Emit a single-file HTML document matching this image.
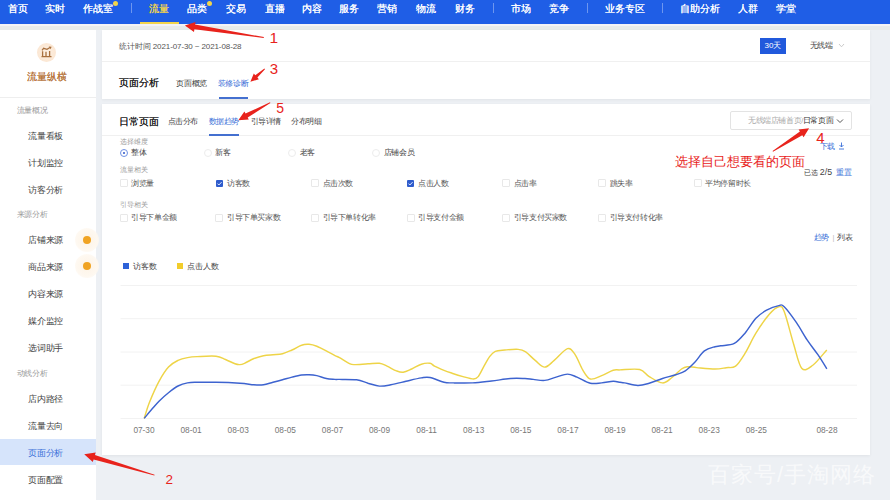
<!DOCTYPE html>
<html><head><meta charset="utf-8"><style>
html,body{margin:0;padding:0;width:890px;height:500px;overflow:hidden;background:#edf0f4;font-family:"Liberation Sans",sans-serif;position:relative}
.t{position:absolute;white-space:nowrap}
</style></head><body>
<div style="position:absolute;left:0;top:0;width:890px;height:24px;background:#1f5ee6"></div>
<div class="t" style="left:7.5px;top:2.3px;font-size:10px;line-height:14px;color:#ffffff;font-weight:normal;text-shadow:0.25px 0 0 #ffffff">首页</div>

<div class="t" style="left:45px;top:2.3px;font-size:10px;line-height:14px;color:#ffffff;font-weight:normal;text-shadow:0.25px 0 0 #ffffff">实时</div>

<div class="t" style="left:83px;top:2.3px;font-size:10px;line-height:14px;color:#ffffff;font-weight:normal;text-shadow:0.25px 0 0 #ffffff">作战室</div>

<div class="t" style="left:149px;top:2.3px;font-size:10px;line-height:14px;color:#f2d54a;font-weight:normal;text-shadow:0.25px 0 0 #f2d54a">流量</div>

<div class="t" style="left:187px;top:2.3px;font-size:10px;line-height:14px;color:#ffffff;font-weight:normal;text-shadow:0.25px 0 0 #ffffff">品类</div>

<div class="t" style="left:226px;top:2.3px;font-size:10px;line-height:14px;color:#ffffff;font-weight:normal;text-shadow:0.25px 0 0 #ffffff">交易</div>

<div class="t" style="left:265px;top:2.3px;font-size:10px;line-height:14px;color:#ffffff;font-weight:normal;text-shadow:0.25px 0 0 #ffffff">直播</div>

<div class="t" style="left:302px;top:2.3px;font-size:10px;line-height:14px;color:#ffffff;font-weight:normal;text-shadow:0.25px 0 0 #ffffff">内容</div>

<div class="t" style="left:339px;top:2.3px;font-size:10px;line-height:14px;color:#ffffff;font-weight:normal;text-shadow:0.25px 0 0 #ffffff">服务</div>

<div class="t" style="left:377px;top:2.3px;font-size:10px;line-height:14px;color:#ffffff;font-weight:normal;text-shadow:0.25px 0 0 #ffffff">营销</div>

<div class="t" style="left:416px;top:2.3px;font-size:10px;line-height:14px;color:#ffffff;font-weight:normal;text-shadow:0.25px 0 0 #ffffff">物流</div>

<div class="t" style="left:455px;top:2.3px;font-size:10px;line-height:14px;color:#ffffff;font-weight:normal;text-shadow:0.25px 0 0 #ffffff">财务</div>

<div class="t" style="left:511px;top:2.3px;font-size:10px;line-height:14px;color:#ffffff;font-weight:normal;text-shadow:0.25px 0 0 #ffffff">市场</div>

<div class="t" style="left:549px;top:2.3px;font-size:10px;line-height:14px;color:#ffffff;font-weight:normal;text-shadow:0.25px 0 0 #ffffff">竞争</div>

<div class="t" style="left:605px;top:2.3px;font-size:10px;line-height:14px;color:#ffffff;font-weight:normal;text-shadow:0.25px 0 0 #ffffff">业务专区</div>

<div class="t" style="left:680px;top:2.3px;font-size:10px;line-height:14px;color:#ffffff;font-weight:normal;text-shadow:0.25px 0 0 #ffffff">自助分析</div>

<div class="t" style="left:738px;top:2.3px;font-size:10px;line-height:14px;color:#ffffff;font-weight:normal;text-shadow:0.25px 0 0 #ffffff">人群</div>

<div class="t" style="left:776px;top:2.3px;font-size:10px;line-height:14px;color:#ffffff;font-weight:normal;text-shadow:0.25px 0 0 #ffffff">学堂</div>

<div style="position:absolute;left:131px;top:3px;width:1px;height:10px;background:rgba(255,255,255,0.35)"></div>
<div style="position:absolute;left:493px;top:3px;width:1px;height:10px;background:rgba(255,255,255,0.35)"></div>
<div style="position:absolute;left:587px;top:3px;width:1px;height:10px;background:rgba(255,255,255,0.35)"></div>
<div style="position:absolute;left:662px;top:3px;width:1px;height:10px;background:rgba(255,255,255,0.35)"></div>
<div style="position:absolute;left:113.0px;top:1px;width:5px;height:5px;border-radius:50%;background:#f2d54a"></div>
<div style="position:absolute;left:206.7px;top:1px;width:5px;height:5px;border-radius:50%;background:#f2d54a"></div>
<div style="position:absolute;left:140px;top:22px;width:39px;height:2px;background:#f2d54a"></div>
<div style="position:absolute;left:0;top:24px;width:890px;height:2px;background:#f3f3f6"></div><div style="position:absolute;left:0;top:26px;width:890px;height:4px;background:#e7ebea"></div>
<div style="position:absolute;left:0;top:30px;width:96px;height:470px;background:#fff"></div>
<div style="position:absolute;left:36.5px;top:42.5px;width:19px;height:19px;border-radius:50%;background:radial-gradient(circle,#fdf1e4 0%,#fbe6d2 75%,#fcefe2 100%)"></div>
<svg style="position:absolute;left:34px;top:40px" width="24" height="24" viewBox="0 0 24 24"><path d="M7.5 16.6H17.5M8.6 16.4V11.2M12 16.4V11.8M15.6 16.4V11" stroke="#a8703e" stroke-width="1.3" fill="none"/><path d="M8 10.3L9.6 8.3L13 9.3L16 7.6" stroke="#a8703e" stroke-width="1.2" fill="none"/><path d="M14.8 6.6L17.6 6.8L16.6 9.2Z" fill="#a8703e"/></svg>
<div class="t" style="left:27px;top:70.0px;font-size:10px;line-height:14px;color:#b8773e;font-weight:normal;text-shadow:0.2px 0 0 #b8773e">流量纵横</div>

<div style="position:absolute;left:0;top:96.5px;width:96px;height:1px;background:#eeeeee"></div>
<div style="position:absolute;left:0;top:438.5px;width:96px;height:26px;background:#d6e4fb"></div>
<div class="t" style="left:16.8px;top:104.7px;font-size:7.5px;line-height:11.5px;color:#999;font-weight:normal;letter-spacing:-0.4px">流量概况</div>

<div class="t" style="left:28.3px;top:129.6px;font-size:8.5px;line-height:12.5px;color:#444;font-weight:normal;letter-spacing:-0.3px">流量看板</div>

<div class="t" style="left:28.3px;top:156.6px;font-size:8.5px;line-height:12.5px;color:#444;font-weight:normal;letter-spacing:-0.3px">计划监控</div>

<div class="t" style="left:28.3px;top:183.6px;font-size:8.5px;line-height:12.5px;color:#444;font-weight:normal;letter-spacing:-0.3px">访客分析</div>

<div class="t" style="left:16.8px;top:208.7px;font-size:7.5px;line-height:11.5px;color:#999;font-weight:normal;letter-spacing:-0.4px">来源分析</div>

<div class="t" style="left:28.3px;top:234.1px;font-size:8.5px;line-height:12.5px;color:#444;font-weight:normal;letter-spacing:-0.3px">店铺来源</div>

<div class="t" style="left:28.3px;top:260.6px;font-size:8.5px;line-height:12.5px;color:#444;font-weight:normal;letter-spacing:-0.3px">商品来源</div>

<div class="t" style="left:28.3px;top:288.1px;font-size:8.5px;line-height:12.5px;color:#444;font-weight:normal;letter-spacing:-0.3px">内容来源</div>

<div class="t" style="left:28.3px;top:314.6px;font-size:8.5px;line-height:12.5px;color:#444;font-weight:normal;letter-spacing:-0.3px">媒介监控</div>

<div class="t" style="left:28.3px;top:341.6px;font-size:8.5px;line-height:12.5px;color:#444;font-weight:normal;letter-spacing:-0.3px">选词助手</div>

<div class="t" style="left:16.8px;top:367.6px;font-size:7.5px;line-height:11.5px;color:#999;font-weight:normal;letter-spacing:-0.4px">动线分析</div>

<div class="t" style="left:28.3px;top:393.1px;font-size:8.5px;line-height:12.5px;color:#444;font-weight:normal;letter-spacing:-0.3px">店内路径</div>

<div class="t" style="left:28.3px;top:419.6px;font-size:8.5px;line-height:12.5px;color:#444;font-weight:normal;letter-spacing:-0.3px">流量去向</div>

<div class="t" style="left:28.3px;top:446.6px;font-size:8.5px;line-height:12.5px;color:#3a6fd8;font-weight:normal;letter-spacing:-0.3px">页面分析</div>

<div class="t" style="left:28.3px;top:473.6px;font-size:8.5px;line-height:12.5px;color:#444;font-weight:normal;letter-spacing:-0.3px">页面配置</div>

<div style="position:absolute;left:75px;top:227.5px;width:24px;height:24px;border-radius:50%;background:radial-gradient(circle, #fdf3e6 0%, #fef8f0 60%, rgba(255,255,255,0) 100%)"></div>
<div style="position:absolute;left:83px;top:235.5px;width:8px;height:8px;border-radius:50%;background:#f0a323"></div>
<div style="position:absolute;left:75px;top:254px;width:24px;height:24px;border-radius:50%;background:radial-gradient(circle, #fdf3e6 0%, #fef8f0 60%, rgba(255,255,255,0) 100%)"></div>
<div style="position:absolute;left:83px;top:262px;width:8px;height:8px;border-radius:50%;background:#f0a323"></div>
<div style="position:absolute;left:102px;top:30px;width:767.5px;height:68.5px;background:#fff;box-shadow:0 1px 3px rgba(0,0,0,0.05)"></div>
<div style="position:absolute;left:102px;top:61px;width:767.5px;height:1px;background:#f0f0f0"></div>
<div class="t" style="left:119px;top:41.4px;font-size:8px;line-height:12px;color:#555;font-weight:normal;letter-spacing:-0.1px"><span style="font-size:7.5px">统计时间</span> 2021-07-30 ~ 2021-08-28</div>

<div style="position:absolute;left:760px;top:38px;width:26px;height:15.5px;background:#2159dc"></div>
<div class="t" style="left:764.5px;top:39.8px;font-size:8px;line-height:12px;color:#fff;font-weight:normal;">30天</div>

<div class="t" style="left:809.5px;top:39.9px;font-size:7.5px;line-height:11.5px;color:#444;font-weight:normal;letter-spacing:-0.2px">无线端</div>

<svg style="position:absolute;left:837.5px;top:43px" width="7" height="5" viewBox="0 0 7 5"><path d="M1 1L3.5 3.8L6 1" stroke="#c4c4c4" stroke-width="0.9" fill="none"/></svg>
<div class="t" style="left:119px;top:76.0px;font-size:10px;line-height:14px;color:#222;font-weight:normal;text-shadow:0.35px 0 0 #222">页面分析</div>

<div class="t" style="left:176.3px;top:77.8px;font-size:7.5px;line-height:11.5px;color:#333;font-weight:normal;letter-spacing:-0.3px">页面概览</div>

<div class="t" style="left:217.8px;top:77.8px;font-size:7.5px;line-height:11.5px;color:#3a6fd8;font-weight:normal;letter-spacing:-0.3px">装修诊断</div>

<div style="position:absolute;left:219px;top:97px;width:29px;height:2px;background:#4470d0"></div>
<div style="position:absolute;left:102px;top:104.2px;width:767.5px;height:351.3px;background:#fff;box-shadow:0 1px 3px rgba(0,0,0,0.06)"></div>
<div style="position:absolute;left:102px;top:135px;width:767.5px;height:1px;background:#f0f0f0"></div>
<div class="t" style="left:118.5px;top:114.8px;font-size:10px;line-height:14px;color:#222;font-weight:normal;text-shadow:0.35px 0 0 #222">日常页面</div>

<div class="t" style="left:167.5px;top:115.8px;font-size:7.5px;line-height:11.5px;color:#444;font-weight:normal;letter-spacing:-0.5px">点击分布</div>

<div class="t" style="left:208.5px;top:115.8px;font-size:7.5px;line-height:11.5px;color:#3a6fd8;font-weight:normal;letter-spacing:-0.5px">数据趋势</div>

<div style="position:absolute;left:209.3px;top:133.5px;width:29.5px;height:2px;background:#4470d0"></div>
<div class="t" style="left:250.5px;top:115.8px;font-size:7.5px;line-height:11.5px;color:#444;font-weight:normal;letter-spacing:-0.5px">引导详情</div>

<div class="t" style="left:291px;top:115.8px;font-size:7.5px;line-height:11.5px;color:#444;font-weight:normal;letter-spacing:-0.5px">分布明细</div>

<div style="position:absolute;left:729.5px;top:111px;width:120px;height:16.5px;border:1px solid #e3e3e3;border-radius:2px;background:#fff"></div>
<div class="t" style="left:748px;top:115.2px;font-size:7.5px;line-height:11.5px;color:#333;font-weight:normal;letter-spacing:-0.4px"><span style="color:#aaa">无线端店铺首页/</span>日常页面</div>

<svg style="position:absolute;left:835.5px;top:118px" width="8" height="6" viewBox="0 0 8 6"><path d="M1 1.5L4 4.5L7 1.5" stroke="#555" stroke-width="1" fill="none"/></svg>
<div class="t" style="left:120px;top:135.5px;font-size:7px;line-height:11px;color:#999;font-weight:normal;">选择维度</div>

<div class="t" style="left:120px;top:164.0px;font-size:7px;line-height:11px;color:#999;font-weight:normal;">流量相关</div>

<div class="t" style="left:120px;top:198.5px;font-size:7px;line-height:11px;color:#999;font-weight:normal;">引导相关</div>

<div style="position:absolute;left:119.8px;top:149.1px;width:6.4px;height:6.4px;border:0.8px solid #6f90e2;border-radius:50%;background:#fff"></div>
<div style="position:absolute;left:122.5px;top:151.79999999999998px;width:2.6px;height:2.6px;border-radius:50%;background:#2d55c8"></div>
<div class="t" style="left:131.3px;top:147.2px;font-size:7.5px;line-height:11.5px;color:#444;font-weight:normal;letter-spacing:-0.3px">整体</div>

<div style="position:absolute;left:203.89999999999998px;top:149.1px;width:6.4px;height:6.4px;border:0.8px solid #ececec;border-radius:50%;background:#fff"></div>
<div class="t" style="left:215.39999999999998px;top:147.2px;font-size:7.5px;line-height:11.5px;color:#444;font-weight:normal;letter-spacing:-0.3px">新客</div>

<div style="position:absolute;left:288.0px;top:149.1px;width:6.4px;height:6.4px;border:0.8px solid #ececec;border-radius:50%;background:#fff"></div>
<div class="t" style="left:299.5px;top:147.2px;font-size:7.5px;line-height:11.5px;color:#444;font-weight:normal;letter-spacing:-0.3px">老客</div>

<div style="position:absolute;left:372.09999999999997px;top:149.1px;width:6.4px;height:6.4px;border:0.8px solid #ececec;border-radius:50%;background:#fff"></div>
<div class="t" style="left:383.59999999999997px;top:147.2px;font-size:7.5px;line-height:11.5px;color:#444;font-weight:normal;letter-spacing:-0.3px">店铺会员</div>

<div style="position:absolute;left:119.8px;top:179px;width:6px;height:6px;border:1px solid #e8e8e8;border-radius:1px;background:#fff"></div>
<div class="t" style="left:131.3px;top:177.8px;font-size:7.5px;line-height:11.5px;color:#555;font-weight:normal;letter-spacing:-0.4px">浏览量</div>

<div style="position:absolute;left:216.14999999999998px;top:179.7px;width:7px;height:7px;border-radius:1px;background:#2f5ccc"></div><svg style="position:absolute;left:216.14999999999998px;top:179.7px" width="7" height="7" viewBox="0 0 7 7"><path d="M1.5 3.6L2.9 5L5.6 2.1" stroke="#dfe8ff" stroke-width="1" fill="none"/></svg>
<div class="t" style="left:226.95px;top:177.8px;font-size:7.5px;line-height:11.5px;color:#555;font-weight:normal;letter-spacing:-0.4px">访客数</div>

<div style="position:absolute;left:311.1px;top:179px;width:6px;height:6px;border:1px solid #e8e8e8;border-radius:1px;background:#fff"></div>
<div class="t" style="left:322.6px;top:177.8px;font-size:7.5px;line-height:11.5px;color:#555;font-weight:normal;letter-spacing:-0.4px">点击次数</div>

<div style="position:absolute;left:407.45000000000005px;top:179.7px;width:7px;height:7px;border-radius:1px;background:#2f5ccc"></div><svg style="position:absolute;left:407.45000000000005px;top:179.7px" width="7" height="7" viewBox="0 0 7 7"><path d="M1.5 3.6L2.9 5L5.6 2.1" stroke="#dfe8ff" stroke-width="1" fill="none"/></svg>
<div class="t" style="left:418.25000000000006px;top:177.8px;font-size:7.5px;line-height:11.5px;color:#555;font-weight:normal;letter-spacing:-0.4px">点击人数</div>

<div style="position:absolute;left:502.40000000000003px;top:179px;width:6px;height:6px;border:1px solid #e8e8e8;border-radius:1px;background:#fff"></div>
<div class="t" style="left:513.9000000000001px;top:177.8px;font-size:7.5px;line-height:11.5px;color:#555;font-weight:normal;letter-spacing:-0.4px">点击率</div>

<div style="position:absolute;left:598.05px;top:179px;width:6px;height:6px;border:1px solid #e8e8e8;border-radius:1px;background:#fff"></div>
<div class="t" style="left:609.55px;top:177.8px;font-size:7.5px;line-height:11.5px;color:#555;font-weight:normal;letter-spacing:-0.4px">跳失率</div>

<div style="position:absolute;left:693.7px;top:179px;width:6px;height:6px;border:1px solid #e8e8e8;border-radius:1px;background:#fff"></div>
<div class="t" style="left:705.2px;top:177.8px;font-size:7.5px;line-height:11.5px;color:#555;font-weight:normal;letter-spacing:-0.4px">平均停留时长</div>

<div style="position:absolute;left:119.8px;top:213.6px;width:6px;height:6px;border:1px solid #e8e8e8;border-radius:1px;background:#fff"></div>
<div class="t" style="left:131.3px;top:212.1px;font-size:7.5px;line-height:11.5px;color:#555;font-weight:normal;letter-spacing:-0.4px">引导下单金额</div>

<div style="position:absolute;left:215.45px;top:213.6px;width:6px;height:6px;border:1px solid #e8e8e8;border-radius:1px;background:#fff"></div>
<div class="t" style="left:226.95px;top:212.1px;font-size:7.5px;line-height:11.5px;color:#555;font-weight:normal;letter-spacing:-0.4px">引导下单买家数</div>

<div style="position:absolute;left:311.1px;top:213.6px;width:6px;height:6px;border:1px solid #e8e8e8;border-radius:1px;background:#fff"></div>
<div class="t" style="left:322.6px;top:212.1px;font-size:7.5px;line-height:11.5px;color:#555;font-weight:normal;letter-spacing:-0.4px">引导下单转化率</div>

<div style="position:absolute;left:406.75000000000006px;top:213.6px;width:6px;height:6px;border:1px solid #e8e8e8;border-radius:1px;background:#fff"></div>
<div class="t" style="left:418.25000000000006px;top:212.1px;font-size:7.5px;line-height:11.5px;color:#555;font-weight:normal;letter-spacing:-0.4px">引导支付金额</div>

<div style="position:absolute;left:502.40000000000003px;top:213.6px;width:6px;height:6px;border:1px solid #e8e8e8;border-radius:1px;background:#fff"></div>
<div class="t" style="left:513.9000000000001px;top:212.1px;font-size:7.5px;line-height:11.5px;color:#555;font-weight:normal;letter-spacing:-0.4px">引导支付买家数</div>

<div style="position:absolute;left:598.05px;top:213.6px;width:6px;height:6px;border:1px solid #e8e8e8;border-radius:1px;background:#fff"></div>
<div class="t" style="left:609.55px;top:212.1px;font-size:7.5px;line-height:11.5px;color:#555;font-weight:normal;letter-spacing:-0.4px">引导支付转化率</div>

<div class="t" style="left:819.8px;top:141.2px;font-size:7.5px;line-height:11.5px;color:#3a6fd8;font-weight:normal;letter-spacing:-0.3px">下载</div>

<svg style="position:absolute;left:837.5px;top:142px" width="7" height="8" viewBox="0 0 7 8"><path d="M3.5 0.5V5M1.5 3L3.5 5L5.5 3M1 7H6" stroke="#3a6fd8" stroke-width="0.9" fill="none"/></svg>
<div class="t" style="left:803.8px;top:167.4px;font-size:7.2px;line-height:11.2px;color:#444;font-weight:normal;">已选 <span style="font-size:8.8px">2/5</span></div>

<div class="t" style="left:836.3px;top:167.1px;font-size:7.5px;line-height:11.5px;color:#3a6fd8;font-weight:normal;letter-spacing:-0.3px">重置</div>

<div class="t" style="left:813.5px;top:232.4px;font-size:7.5px;line-height:11.5px;color:#444;font-weight:normal;letter-spacing:-0.2px"><span style="color:#3a6fd8">趋势</span><span style="color:#bbb;margin:0 2.5px 0 3.5px">|</span>列表</div>

<div style="position:absolute;left:122.5px;top:263px;width:6px;height:6px;background:#2d62d8"></div>
<div class="t" style="left:133px;top:261.2px;font-size:7.5px;line-height:11.5px;color:#444;font-weight:normal;">访客数</div>

<div style="position:absolute;left:176.5px;top:263px;width:6px;height:6px;background:#f2cd2b"></div>
<div class="t" style="left:186.5px;top:260.9px;font-size:7.5px;line-height:11.5px;color:#444;font-weight:normal;">点击人数</div>

<svg style="position:absolute;left:0;top:0" width="890" height="500" viewBox="0 0 890 500"><line x1="120.5" y1="285.5" x2="857" y2="285.5" stroke="#f2f2f2" stroke-width="1"/><line x1="120.5" y1="318.7" x2="857" y2="318.7" stroke="#f2f2f2" stroke-width="1"/><line x1="120.5" y1="352" x2="857" y2="352" stroke="#f2f2f2" stroke-width="1"/><line x1="120.5" y1="385.2" x2="857" y2="385.2" stroke="#f2f2f2" stroke-width="1"/><line x1="120.5" y1="418.5" x2="857" y2="418.5" stroke="#f2f2f2" stroke-width="1"/><path d="M144.2 418.4 C145.1 415.7 147.0 408.4 149.5 402.2 C152.0 396.0 155.8 387.2 159.0 381.3 C162.2 375.4 165.3 370.5 168.5 367.0 C171.7 363.5 174.8 362.0 178.0 360.4 C181.2 358.8 184.3 358.2 187.5 357.6 C190.7 357.0 192.2 356.8 197.0 356.6 C201.8 356.4 211.2 355.7 216.0 356.2 C220.8 356.7 222.3 358.2 225.5 359.5 C228.7 360.8 232.6 362.9 235.0 363.8 C237.4 364.7 238.2 364.7 239.8 364.6 C241.3 364.5 242.1 364.3 244.5 363.3 C246.9 362.3 250.8 359.8 254.0 358.5 C257.2 357.2 260.3 356.3 263.5 355.7 C266.7 355.1 269.8 355.0 273.0 354.7 C276.2 354.4 279.3 354.6 282.5 353.8 C285.7 353.0 288.8 351.4 292.0 350.0 C295.2 348.6 298.7 346.1 301.5 345.2 C304.3 344.2 306.5 344.1 309.0 344.3 C311.5 344.5 313.9 345.1 316.8 346.2 C319.6 347.3 323.3 349.3 326.3 350.9 C329.3 352.5 332.8 354.6 335.0 355.7 C337.2 356.8 337.2 356.3 339.5 357.6 C341.8 358.9 346.6 362.1 349.0 363.3 C351.4 364.5 350.6 364.5 353.8 364.6 C357.0 364.7 363.7 364.0 368.0 363.8 C372.3 363.6 376.2 362.9 379.4 363.3 C382.6 363.7 384.1 364.8 387.0 366.1 C389.9 367.4 393.8 369.9 396.5 370.9 C399.2 371.9 400.7 372.5 403.2 372.2 C405.7 371.9 408.7 370.3 411.7 369.0 C414.7 367.7 418.2 365.1 421.3 364.2 C424.4 363.2 427.8 363.0 430.0 363.3 C432.2 363.6 432.2 364.9 434.5 366.1 C436.8 367.3 440.8 369.0 444.0 370.3 C447.2 371.6 450.3 372.6 453.5 373.7 C456.7 374.8 459.7 375.7 463.0 376.6 C466.3 377.5 471.0 379.0 473.5 379.0 C476.0 379.0 476.4 378.8 478.2 376.6 C479.9 374.5 482.1 369.4 484.0 366.1 C485.9 362.8 487.7 359.1 489.6 356.6 C491.5 354.1 492.8 352.4 495.3 351.3 C497.8 350.2 501.0 350.3 504.8 350.0 C508.6 349.7 514.7 349.1 518.2 349.4 C521.7 349.7 522.9 350.1 525.7 351.9 C528.5 353.7 532.0 357.9 535.2 360.4 C538.4 362.9 541.5 367.1 544.7 367.1 C547.9 367.1 550.4 363.5 554.2 360.4 C558.0 357.3 564.0 349.6 567.5 348.6 C571.0 347.7 572.6 351.1 575.1 354.7 C577.6 358.2 580.2 365.8 582.7 369.9 C585.2 373.9 587.1 378.1 590.3 379.0 C593.5 379.9 597.9 377.1 601.7 375.6 C605.5 374.2 610.2 371.2 613.2 370.3 C616.2 369.4 615.6 370.0 620.0 369.9 C624.4 369.8 634.8 368.4 639.7 369.5 C644.6 370.6 645.4 374.4 649.2 376.6 C653.0 378.8 658.7 382.8 662.5 382.9 C666.3 383.0 668.8 379.8 672.0 377.5 C675.2 375.2 679.0 370.8 681.5 369.0 C684.0 367.2 684.7 366.9 687.2 366.7 C689.7 366.5 692.1 367.2 696.7 367.6 C701.3 368.0 710.1 369.0 715.0 369.0 C719.9 369.0 722.8 368.2 726.2 367.7 C729.6 367.2 732.5 368.5 735.6 366.1 C738.7 363.7 741.6 358.9 745.0 353.4 C748.4 347.9 751.9 339.7 755.9 333.2 C759.9 326.7 765.5 318.7 769.3 314.3 C773.1 309.9 776.3 307.1 778.8 306.7 C781.3 306.2 781.7 305.4 784.2 311.6 C786.7 317.8 790.7 334.6 793.6 344.0 C796.5 353.4 798.6 364.6 801.7 368.2 C804.9 371.8 808.3 368.6 812.5 365.5 C816.7 362.4 824.4 352.5 826.8 349.9" stroke="#eed447" stroke-width="1.45" fill="none"/><path d="M144.2 418.4 C145.4 417.0 148.9 412.6 151.4 409.8 C153.9 407.0 156.2 404.2 159.0 401.3 C161.8 398.4 165.3 395.2 168.5 392.7 C171.7 390.1 174.8 387.6 178.0 386.0 C181.2 384.4 184.3 383.5 187.5 382.9 C190.7 382.3 192.2 382.4 197.0 382.3 C201.8 382.2 208.8 382.2 216.0 382.3 C223.2 382.4 233.7 382.8 240.0 383.2 C246.3 383.6 250.1 384.5 254.0 384.8 C257.9 385.1 260.3 385.2 263.5 384.8 C266.7 384.4 269.8 383.1 273.0 382.3 C276.2 381.5 279.3 380.7 282.5 379.8 C285.7 378.9 288.8 377.9 292.0 377.1 C295.2 376.3 298.7 375.4 301.5 375.0 C304.3 374.6 306.5 374.6 309.0 374.7 C311.5 374.8 313.9 375.0 316.8 375.6 C319.6 376.2 323.3 377.9 326.3 378.5 C329.3 379.1 332.8 379.2 335.0 379.4 C337.2 379.5 335.9 379.3 339.5 379.4 C343.1 379.5 351.9 379.2 356.6 379.8 C361.4 380.4 364.2 382.1 368.0 383.2 C371.8 384.2 375.6 385.8 379.4 386.1 C383.2 386.4 386.4 385.6 390.8 384.8 C395.2 384.0 400.9 382.5 406.0 381.3 C411.1 380.1 417.3 378.5 421.3 377.9 C425.3 377.3 426.2 376.8 430.0 377.5 C433.8 378.2 440.1 381.4 444.0 382.3 C447.9 383.2 448.8 382.8 453.5 382.9 C458.2 383.0 466.2 383.2 472.5 382.9 C478.8 382.6 485.2 381.7 491.5 381.0 C497.8 380.3 504.9 378.9 510.5 378.5 C516.1 378.1 521.2 378.4 525.0 378.5 C528.8 378.6 530.0 379.1 533.3 379.4 C536.6 379.7 540.9 380.8 544.7 380.4 C548.5 380.0 552.3 378.2 556.1 377.1 C559.9 376.1 564.0 374.1 567.5 374.1 C571.0 374.1 573.2 375.6 577.0 377.1 C580.8 378.6 586.2 382.2 590.3 383.2 C594.4 384.2 597.9 383.2 601.7 382.9 C605.5 382.6 610.2 381.4 613.2 381.3 C616.2 381.2 618.1 382.0 620.0 382.3 C621.9 382.6 621.5 382.4 624.5 382.9 C627.5 383.4 633.7 385.4 637.8 385.5 C641.9 385.6 645.1 384.4 649.2 383.2 C653.3 382.0 658.1 379.9 662.5 378.5 C666.9 377.1 672.0 376.0 675.8 374.7 C679.6 373.4 682.1 373.0 685.3 370.9 C688.5 368.8 691.6 365.6 694.8 362.3 C698.0 359.0 701.0 353.5 704.4 350.9 C707.8 348.3 712.3 347.5 715.0 346.7 C717.7 345.9 717.6 346.4 720.8 345.8 C724.0 345.2 730.3 345.5 734.3 343.4 C738.3 341.3 741.4 337.4 745.0 333.2 C748.6 329.0 752.3 322.1 755.9 318.3 C759.5 314.5 762.8 312.3 766.6 310.2 C770.4 308.1 775.9 306.2 778.8 305.6 C781.7 305.0 781.3 303.9 784.2 306.7 C787.1 309.5 792.5 316.9 796.3 322.4 C800.1 327.9 803.5 334.5 807.1 339.9 C810.7 345.3 814.6 349.9 817.9 354.7 C821.2 359.5 825.3 366.4 826.8 368.8" stroke="#3d63cf" stroke-width="1.45" fill="none"/><g font-family="Liberation Sans, sans-serif" font-size="8.3" fill="#777"><text x="144.0" y="433" text-anchor="middle">07-30</text><text x="191.1" y="433" text-anchor="middle">08-01</text><text x="238.2" y="433" text-anchor="middle">08-03</text><text x="285.3" y="433" text-anchor="middle">08-05</text><text x="332.4" y="433" text-anchor="middle">08-07</text><text x="379.5" y="433" text-anchor="middle">08-09</text><text x="426.6" y="433" text-anchor="middle">08-11</text><text x="473.7" y="433" text-anchor="middle">08-13</text><text x="520.8" y="433" text-anchor="middle">08-15</text><text x="567.9" y="433" text-anchor="middle">08-17</text><text x="615.0" y="433" text-anchor="middle">08-19</text><text x="662.1" y="433" text-anchor="middle">08-21</text><text x="709.2" y="433" text-anchor="middle">08-23</text><text x="756.3" y="433" text-anchor="middle">08-25</text><text x="827" y="433" text-anchor="middle">08-28</text></g></svg>
<svg style="position:absolute;left:0;top:0" width="890" height="500"><polygon points="263.9,37.1 195.1,24.6 195.5,22.0 184.9,25.4 194.0,31.9 194.4,29.2 263.7,37.9" fill="#e8231c"/><polygon points="264.4,68.6 255.3,75.2 253.8,73.5 250.4,81.7 258.9,79.2 257.4,77.6 265.0,69.2" fill="#e8231c"/><polygon points="270.0,102.2 245.5,113.6 244.4,111.6 238.3,120.2 248.8,119.6 247.7,117.6 270.4,103.0" fill="#e8231c"/><polygon points="773.0,151.7 802.3,135.3 803.6,137.3 809.1,128.3 798.6,129.5 799.9,131.5 772.6,151.1" fill="#e8231c"/><polygon points="154.6,474.7 94.9,455.0 95.7,452.4 84.2,454.2 92.8,462.0 93.6,459.4 154.4,475.5" fill="#e8231c"/></svg>
<div class="t" style="left:269.5px;top:27.8px;font-size:15.5px;line-height:19.5px;color:#e8231c;font-weight:normal;">1</div>

<div class="t" style="left:269.8px;top:59.0px;font-size:15px;line-height:19px;color:#e8231c;font-weight:normal;">3</div>

<div class="t" style="left:276.3px;top:98.5px;font-size:14px;line-height:18px;color:#e8231c;font-weight:normal;">5</div>

<div class="t" style="left:816.3px;top:128.3px;font-size:15px;line-height:19px;color:#e8231c;font-weight:normal;">4</div>

<div class="t" style="left:165.5px;top:471.2px;font-size:13.5px;line-height:17.5px;color:#e8231c;font-weight:normal;">2</div>

<div class="t" style="left:675px;top:152.7px;font-size:13.3px;line-height:17.3px;color:#e8231c;font-weight:normal;">选择自己想要看的页面</div>

<div class="t" style="left:708px;top:461.5px;font-size:22px;line-height:26px;color:rgba(255,255,255,0.65);font-weight:normal;letter-spacing:1px">百家号/手淘网络</div>

</body></html>
